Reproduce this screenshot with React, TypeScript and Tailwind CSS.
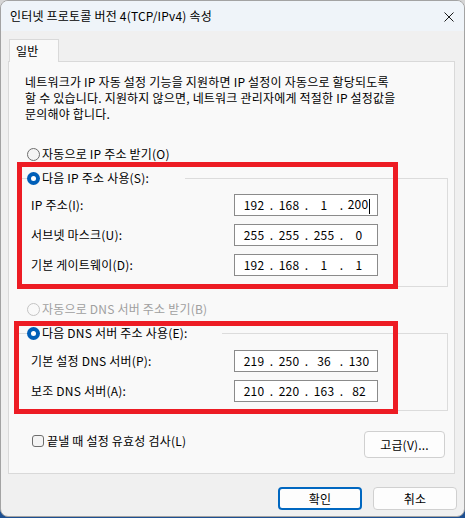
import React from "react";

type RadioProps = { checked?: boolean; disabled?: boolean };

function Radio({ checked = false, disabled = false }: RadioProps) {
  if (checked) {
    return (
      <span className="flex h-[13px] w-[13px] shrink-0 items-center justify-center rounded-full bg-[#005fb8]">
        <span className="h-[5px] w-[5px] rounded-full bg-white" />
      </span>
    );
  }
  return (
    <span
      className={`h-[13px] w-[13px] shrink-0 rounded-full border ${
        disabled ? "border-[#c4c4c4] bg-[#f9f9f9]" : "border-[#6e6e6e] bg-[#f4f4f4]"
      }`}
    />
  );
}

function IpField({ octets, cursor }: { octets: string[]; cursor?: boolean }) {
  return (
    <div className="flex h-[22px] w-[144px] items-center border border-[#8b8b8b] bg-white pl-[4px]">
      {octets.map((o, i) => (
        <div key={i} className="flex items-center">
          <span className="w-[30px] text-center leading-[16px]">
            {o}
            {cursor && i === 3 && (
              <span className="ml-[1px] inline-block h-[15px] w-px bg-black align-middle" />
            )}
          </span>
          {i < 3 && <span className="w-[5px] text-center leading-[16px]">.</span>}
        </div>
      ))}
    </div>
  );
}

function Row({ label, octets, cursor }: { label: string; octets: string[]; cursor?: boolean }) {
  return (
    <div className="flex items-center">
      <span className="w-[203px] leading-[16px]">{label}</span>
      <IpField octets={octets} cursor={cursor} />
    </div>
  );
}

function Legend({ text, pad }: { text: string; pad: string }) {
  return (
    <legend className={`ml-[9px] ${pad}`}>
      <div className="flex h-[16px] items-center gap-[2px] leading-[16px]">
        <Radio checked />
        <span>{text}</span>
      </div>
    </legend>
  );
}

export default function App() {
  return (
    <div className="h-[518px] w-[465px] overflow-hidden bg-[linear-gradient(180deg,#d6d6d6_0%,#d6d6d6_89%,#1d4f91_91%)] font-['Malgun_Gothic','Noto_Sans_CJK_KR',sans-serif] text-[12px] tracking-[0.2px] text-black">
      <div className="h-[517px] w-[465px] overflow-hidden rounded-[8px] border border-[#a3a3a3] bg-[#f0f0f0]">
        {/* title bar */}
        <div className="flex h-[30px] items-center justify-between bg-[#eff4f9] pl-[9px] pr-[10px]">
          <span className="leading-[16px]">인터넷 프로토콜 버전 4(TCP/IPv4) 속성</span>
          <svg width="10" height="10" viewBox="0 0 10 10" className="mt-[1px]">
            <path d="M0.5 0.5 L9.5 9.5 M9.5 0.5 L0.5 9.5" stroke="#1a1a1a" strokeWidth="1" />
          </svg>
        </div>

        <div className="pt-[8px]">
          <div className="relative z-10 -mb-px ml-[8px] flex h-[23px] w-[50px] items-center border border-b-0 border-[#d9d9d9] bg-[#f9f9f9] pl-[6px]">
            <span className="leading-[16px]">일반</span>
          </div>

          <div className="relative ml-[7px] h-[413px] w-[447px] border border-[#d9d9d9] bg-[#f9f9f9] pt-[12px]">
            <p className="whitespace-nowrap pl-[16px] leading-[16px]">
              네트워크가 IP 자동 설정 기능을 지원하면 IP 설정이 자동으로 할당되도록
              <br />
              할 수 있습니다. 지원하지 않으면, 네트워크 관리자에게 적절한 IP 설정값을
              <br />
              문의해야 합니다.
            </p>

            <div className="mt-[24px] flex h-[16px] items-center gap-[2px] pl-[18px]">
              <Radio />
              <span className="leading-[16px]">자동으로 IP 주소 받기(O)</span>
            </div>

            <fieldset className="ml-[8px] mt-[8px] w-[431px] border border-[#dcdcdc]">
              <Legend text="다음 IP 주소 사용(S):" pad="pr-[36px]" />
              <div className="flex flex-col gap-[8px] pb-[10px] pl-[13px] pt-[8px]">
                <Row label="IP 주소(I):" octets={["192", "168", "1", "200"]} cursor />
                <Row label="서브넷 마스크(U):" octets={["255", "255", "255", "0"]} />
                <Row label="기본 게이트웨이(D):" octets={["192", "168", "1", "1"]} />
              </div>
            </fieldset>

            <div className="mt-[14px] flex h-[16px] items-center gap-[2px] pl-[18px] text-[#a0a0a0]">
              <Radio disabled />
              <span className="leading-[16px]">자동으로 DNS 서버 주소 받기(B)</span>
            </div>

            <fieldset className="ml-[8px] mt-[8px] w-[431px] border border-[#dcdcdc]">
              <Legend text="다음 DNS 서버 주소 사용(E):" pad="pr-[35px]" />
              <div className="flex flex-col gap-[8px] pb-[8px] pl-[13px] pt-[9px]">
                <Row label="기본 설정 DNS 서버(P):" octets={["219", "250", "36", "130"]} />
                <Row label="보조 DNS 서버(A):" octets={["210", "220", "163", "82"]} />
              </div>
            </fieldset>

            <div className="mt-[20px] flex items-start justify-between pl-[23px] pr-[9px]">
              <div className="mt-[2px] flex h-[16px] items-center gap-[3px]">
                <span className="h-[12px] w-[12px] rounded-[3px] border border-[#6e6e6e] bg-[#f4f4f4]" />
                <span className="leading-[16px]">끝낼 때 설정 유효성 검사(L)</span>
              </div>
              <button className="flex h-[27px] w-[81px] items-center justify-center rounded-[4px] border border-[#d0d0d0] bg-[#fdfdfd] leading-[16px]">
                고급(V)...
              </button>
            </div>

            {/* annotation boxes drawn over the dialog */}
            <div className="pointer-events-none absolute left-[8px] top-[100px] h-[127px] w-[381px] border-[5px] border-[#ed1c24]" />
            <div className="pointer-events-none absolute left-[5px] top-[259px] h-[93px] w-[384px] border-[5px] border-[#ed1c24]" />
          </div>

          <div className="flex justify-end gap-[11px] pr-[7px] pt-[13px]">
            <button className="flex h-[23px] w-[84px] items-center justify-center rounded-[4px] border-2 border-[#0067c0] bg-[#fdfdfd] leading-[16px]">
              확인
            </button>
            <button className="flex h-[23px] w-[84px] items-center justify-center rounded-[4px] border border-[#d0d0d0] bg-[#fdfdfd] leading-[16px]">
              취소
            </button>
          </div>
        </div>
      </div>
    </div>
  );
}
